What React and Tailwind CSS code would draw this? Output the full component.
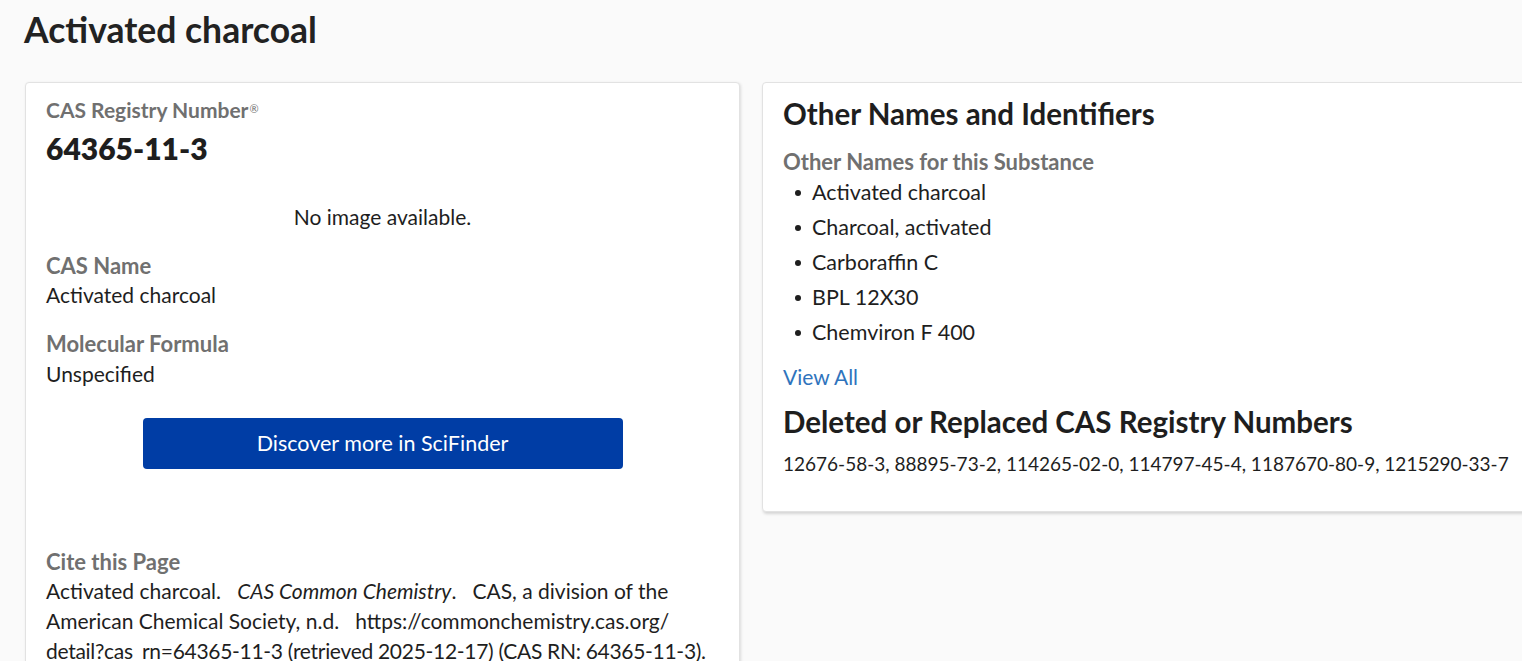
import React from "react";

const otherNames = [
  "Activated charcoal",
  "Charcoal, activated",
  "Carboraffin C",
  "BPL 12X30",
  "Chemviron F 400",
];

function Label({ children }) {
  return <div className="text-[22px] font-bold leading-[26px] text-[#707070]">{children}</div>;
}

export default function App() {
  return (
    <div
      className="h-[661px] w-[1522px] overflow-hidden bg-[#fafafa] text-[#1e1e1e]"
      style={{ fontFamily: "Lato, 'Noto Sans', sans-serif" }}
    >
      <h1 className="pl-6 pt-[10px] text-[35.5px] font-bold leading-[40px] text-[#222]">Activated charcoal</h1>

      <div className="mt-[32px] flex items-start gap-[22px] pl-[25px]">
        {/* Left card */}
        <div className="w-[715px] shrink-0 rounded border border-[#e2e2e2] bg-white px-5 pt-[14px] pb-10 shadow-[1px_1px_3px_rgba(0,0,0,0.12)]">
          <div className="text-[21px] font-bold leading-[26px] text-[#707070]">
            CAS Registry Number<sup className="ml-[1px] text-[11px] font-normal">®</sup>
          </div>
          <div className="mt-[7px] text-[30px] font-extrabold leading-[36px] text-[#1e1e1e]">64365-11-3</div>

          <div className="mt-[38px] text-center text-[21px] leading-[26px]">No image available.</div>

          <div className="mt-[23px]">
            <Label>CAS Name</Label>
            <div className="mt-[3px] text-[21px] leading-[26px]">Activated charcoal</div>
          </div>

          <div className="mt-[23px]">
            <Label>Molecular Formula</Label>
            <div className="mt-[4px] text-[21px] leading-[26px]">Unspecified</div>
          </div>

          <div className="mt-[31px] flex justify-center">
            <button className="h-[51px] w-[480px] rounded bg-[#003da5] text-[21.5px] text-white">
              Discover more in SciFinder
            </button>
          </div>

          <div className="mt-[80px]">
            <Label>Cite this Page</Label>
            <div className="mt-[1px] whitespace-nowrap text-[21px] leading-[30px]">
              <div>
                Activated charcoal.&nbsp;&nbsp; <i>CAS Common Chemistry</i>.&nbsp;&nbsp; CAS, a division of the
              </div>
              <div>American Chemical Society, n.d.&nbsp;&nbsp; https://commonchemistry.cas.org/</div>
              <div className="tracking-[-0.3px]">
                detail?cas_rn=64365-11-3 (retrieved 2025-12-17) (CAS RN: 64365-11-3).
              </div>
            </div>
          </div>
        </div>

        {/* Right card */}
        <div className="w-[800px] shrink-0 rounded border border-[#e2e2e2] bg-white px-5 pt-[14px] pb-[35px] shadow-[1px_2px_3px_rgba(0,0,0,0.15)]">
          <h2 className="text-[29.5px] font-bold leading-[34px] text-[#1e1e1e]">Other Names and Identifiers</h2>
          <div className="mt-[18px]">
            <Label>Other Names for this Substance</Label>
            <ul className="mt-[4px]">
              {otherNames.map((n) => (
                <li key={n} className="flex h-[35px] items-start text-[21.5px] leading-[26px]">
                  <span className="ml-[12px] mr-[11px] mt-[11px] h-[6px] w-[6px] shrink-0 rounded-full bg-[#1e1e1e]" />
                  {n}
                </li>
              ))}
            </ul>
          </div>
          <a className="mt-[10px] block text-[21px] leading-[26px] text-[#2f74bd]">View All</a>
          <h2 className="mt-[15px] text-[29.5px] font-bold leading-[34px] text-[#1e1e1e]">
            Deleted or Replaced CAS Registry Numbers
          </h2>
          <div className="mt-[13px] text-[19px] leading-[24px]">
            12676-58-3, 88895-73-2, 114265-02-0, 114797-45-4, 1187670-80-9, 1215290-33-7
          </div>
        </div>
      </div>
    </div>
  );
}
